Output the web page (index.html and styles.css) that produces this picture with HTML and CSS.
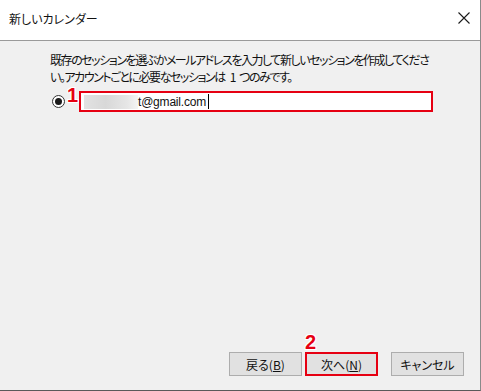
FILE: index.html
```html
<!DOCTYPE html>
<html lang="ja">
<head>
    <meta charset="UTF-8">
    <title>新しいカレンダー</title>
    <link rel="stylesheet" href="styles.css">
</head>
<body>
   <div id="dialog">
       <div class="titlebar">
           <span class="title">新しいカレンダー</span>
           <svg class="close" width="12" height="12" viewBox="0 0 12 12">
               <path d="M0.5 0.5 L11.5 11.5 M11.5 0.5 L0.5 11.5" stroke="#1a1a1a" stroke-width="1.1" fill="none"/>
           </svg>
       </div>
       <div class="content">
           <p class="desc">既存のセッションを選ぶかメールアドレスを入力して新しいセッションを作成してくださ<br>い。アカウントごとに必要なセッションは<span class="num">1</span>つのみです。</p>
           <div class="row">
               <span class="radio"><span class="dot"></span></span>
               <div class="field">
                   <span class="mark mark1">1</span>
                   <span class="blur"></span><span class="value">t@gmail.com</span><span class="caret"></span>
               </div>
           </div>
           <div class="spacer"></div>
           <div class="buttons">
               <button class="btn">戻る(<u>B</u>)</button>
               <button class="btn next">
                   <span class="mark mark2">2</span>
                   次へ(<u>N</u>)
               </button>
               <button class="btn cancel">キャンセル</button>
           </div>
       </div>
   </div>
</body>
</html>
```

FILE: styles.css
```css
*{
    margin: 0;
    padding: 0;
    box-sizing: border-box;
}
body{
    width: 481px;
    height: 391px;
    font-family: "Noto Sans CJK JP", "Noto Sans", sans-serif;
    font-size: 12px;
    color: #000;
    background: #fff;
    overflow: hidden;
}
#dialog{
    width: 481px;
    height: 391px;
    display: flex;
    flex-direction: column;
    border-right: 1px solid #8a8a8a;
    border-bottom: 1px solid #5a5a5a;
}
.titlebar{
    height: 41px;
    background: #fff;
    border-bottom: 1px solid #9a9a9a;
    display: flex;
    align-items: center;
    justify-content: space-between;
    padding: 0 10px 4px 9px;
}
.title{
    font-size: 12px;
    font-feature-settings: "palt";
    color: #111;
}
.content{
    flex: 1;
    background: #f0f0f0;
    display: flex;
    flex-direction: column;
    padding: 10px 16px 14px 50px;
}
.desc{
    font-size: 12px;
    line-height: 17px;
    white-space: nowrap;
    font-feature-settings: "palt";
    letter-spacing: -1.45px;
    color: #111;
}
.desc .num{
    margin: 0 4px 0 5px;
}
.row{
    display: flex;
    align-items: center;
    margin-top: 6px;
}
.radio{
    width: 13px;
    height: 13px;
    border: 1px solid #333;
    border-radius: 50%;
    background: #fff;
    display: flex;
    align-items: center;
    justify-content: center;
    margin: 0 0 0 2px;
}
.dot{
    width: 7px;
    height: 7px;
    border-radius: 50%;
    background: #1a1a1a;
}
.field{
    position: relative;
    margin-left: 14px;
    width: 354px;
    height: 21px;
    background: #fff;
    border: 2px solid #e60012;
    display: flex;
    align-items: center;
    padding-left: 3px;
}
.blur{
    width: 54px;
    height: 14px;
    background: linear-gradient(90deg, #e2e2e2, #d8d8d8 40%, #e6e6e6 80%, #f4f4f4);
}
.value{
    font-family: "Liberation Sans", Arial, sans-serif;
    font-size: 12px;
    letter-spacing: -0.2px;
    color: #111;
}
.caret{
    width: 1px;
    height: 15px;
    background: #000;
    margin-left: 2px;
}
.mark{
    position: absolute;
    font-family: "Liberation Sans", Arial, sans-serif;
    font-weight: bold;
    font-size: 20px;
    color: #e60012;
    text-shadow: -1px -1px 0 #fff, 1px -1px 0 #fff, -1px 1px 0 #fff, 1px 1px 0 #fff, 0 -1px 0 #fff, 0 1px 0 #fff;
    line-height: 1;
}
.mark1{
    left: -14px;
    top: -8px;
}
.mark2{
    left: -2px;
    top: -22px;
}
.spacer{
    flex: 1;
}
.buttons{
    display: flex;
    margin-left: 179px;
}
.btn{
    position: relative;
    width: 73px;
    height: 24px;
    background: #e1e1e1;
    border: 1px solid #adadad;
    font-family: "Noto Sans CJK JP", sans-serif;
    font-size: 12px;
    font-feature-settings: "palt";
    color: #111;
}
.btn u{
    text-underline-offset: 1px;
}
.next{
    margin-left: 3px;
    border: 2px solid #e60012;
}
.cancel{
    margin-left: 13px;
}
```
